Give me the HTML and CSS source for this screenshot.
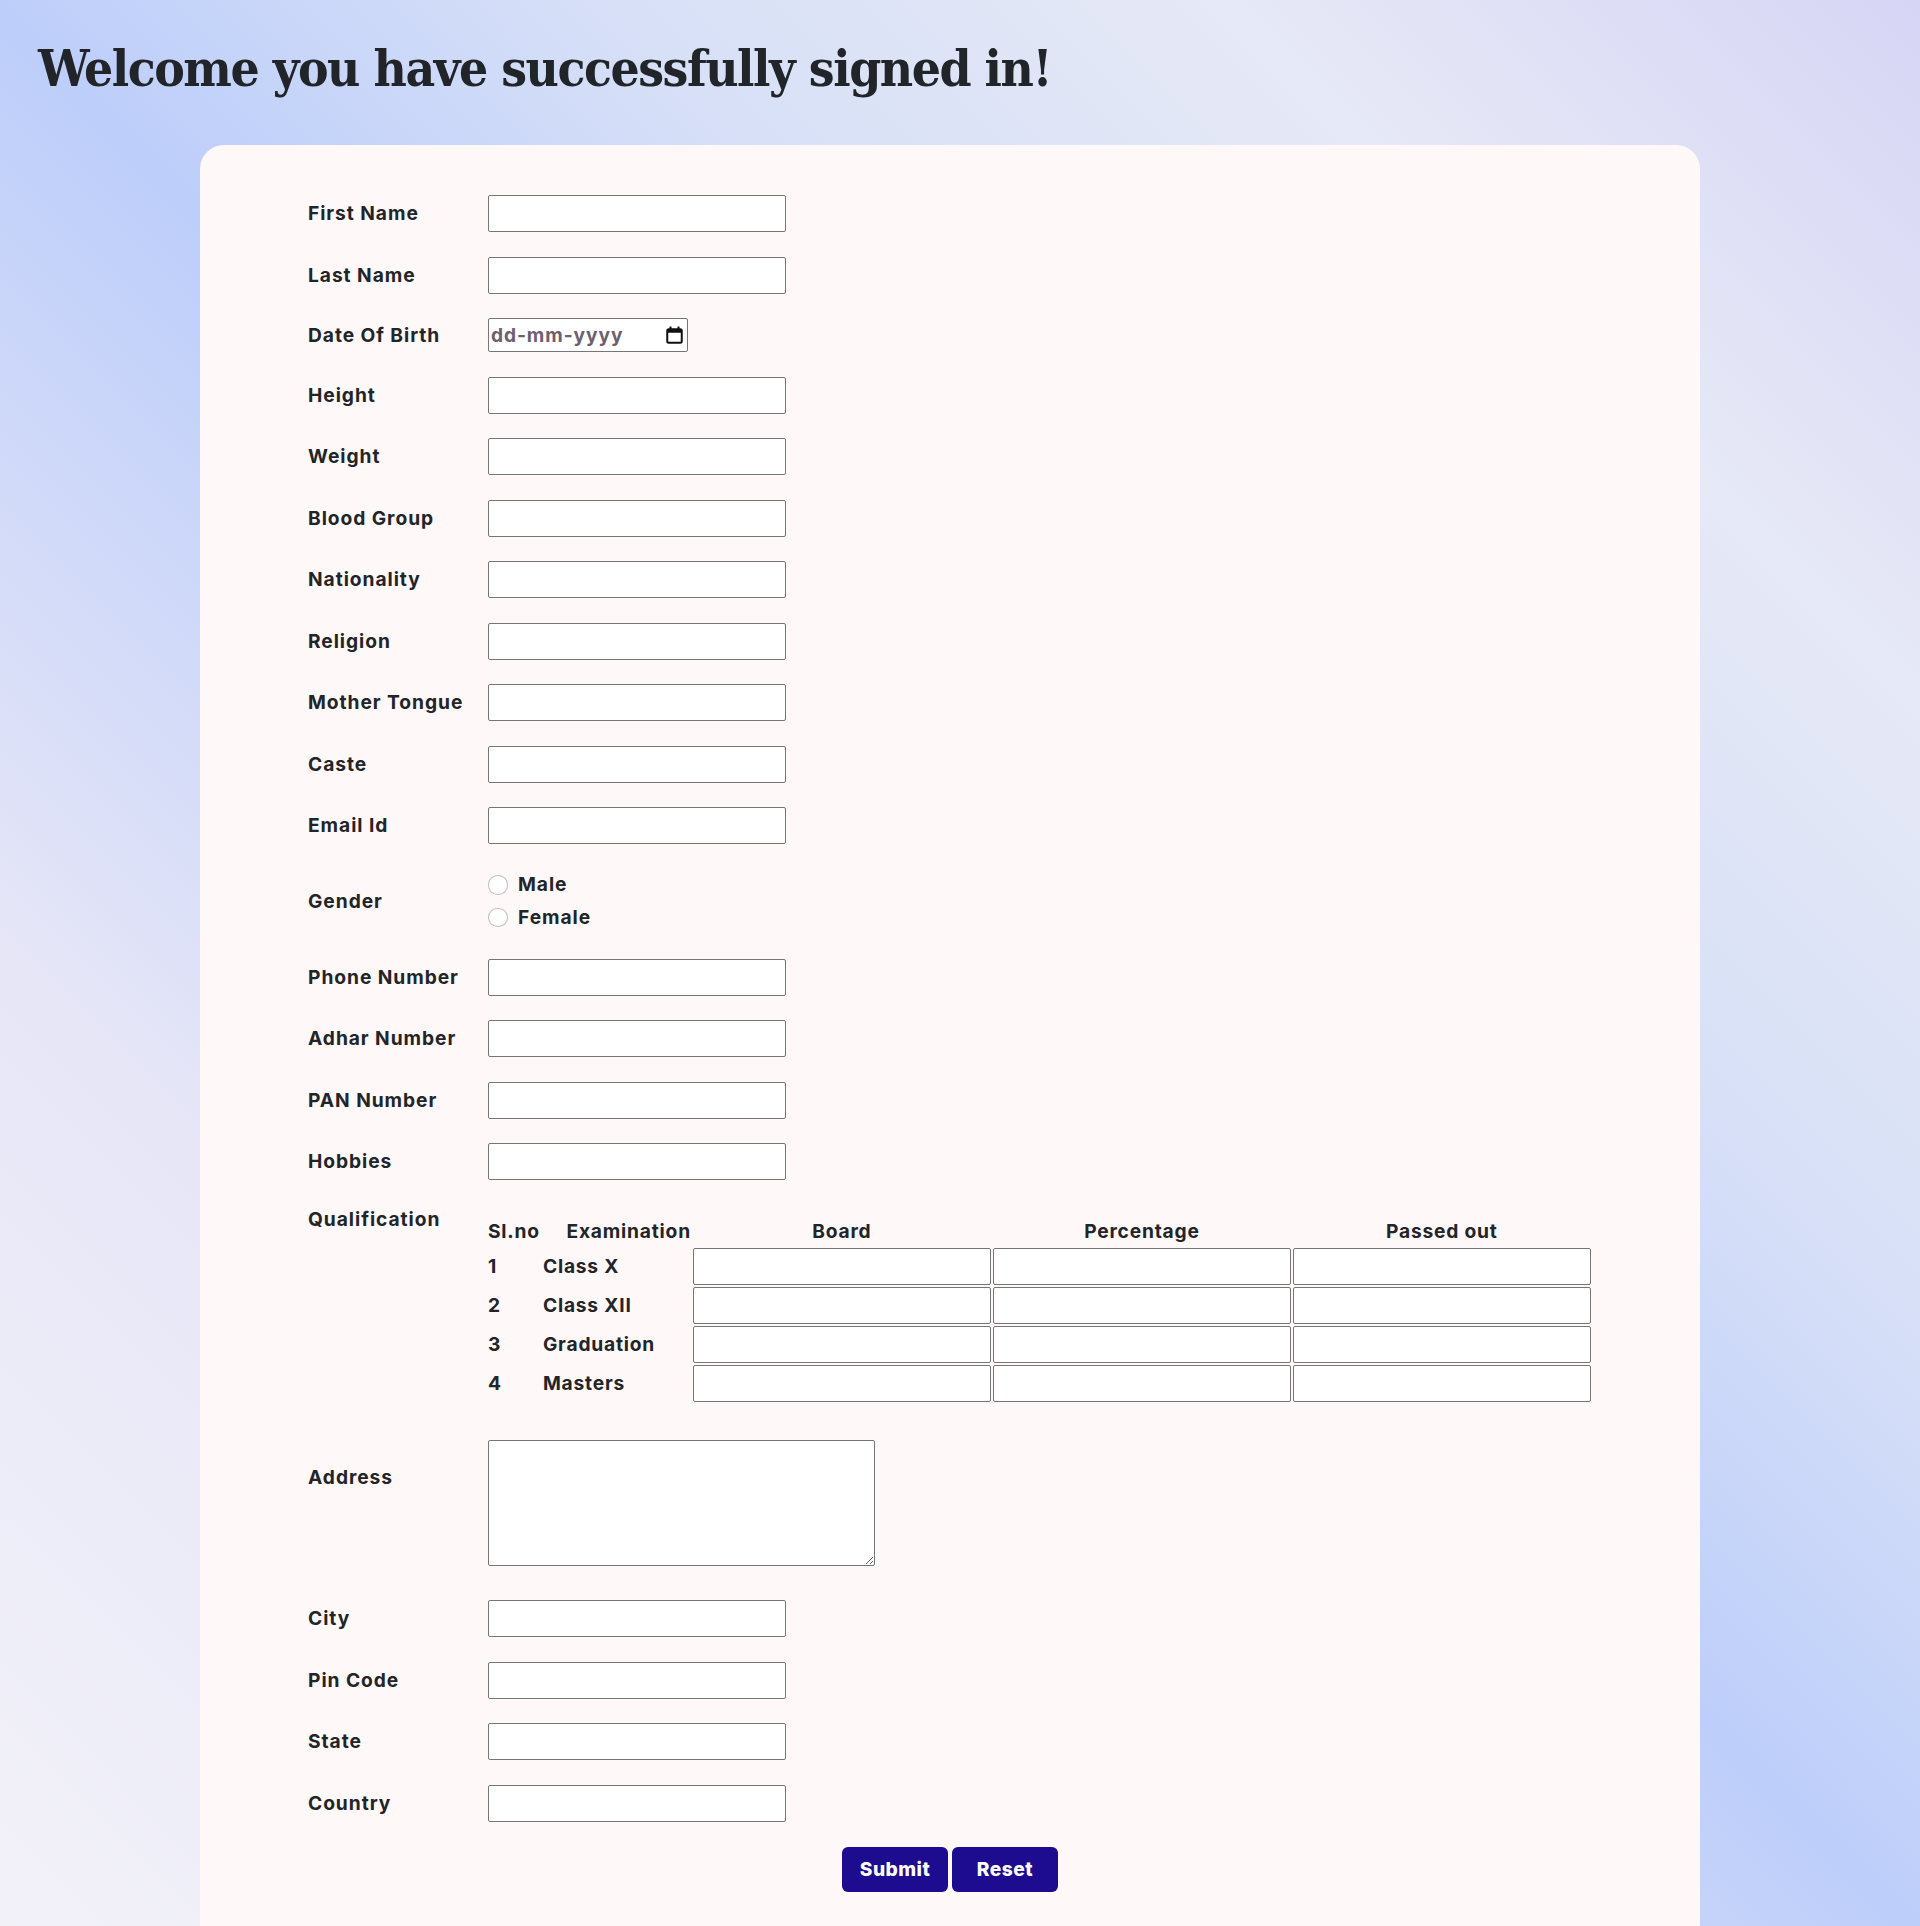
FILE: index.html
```html
<!DOCTYPE html>
<html lang="en">
<head>
<meta charset="utf-8">
<title>Welcome</title>
<link rel="stylesheet" href="styles.css">
</head>
<body>
<h1 class="title">Welcome you have successfully signed in!</h1>
<main class="card">
  <form class="form">
    <div class="row"><label class="label">First Name</label><input class="field" type="text"></div>
    <div class="row"><label class="label">Last Name</label><input class="field" type="text"></div>
    <div class="row"><label class="label">Date Of Birth</label>
      <div class="date-field">
        <input class="date-input" type="text" placeholder="dd-mm-yyyy">
        <svg class="cal" width="17" height="18" viewBox="0 0 17 18" aria-hidden="true">
          <rect x="1.25" y="3.25" width="14.5" height="13.5" rx="1.5" fill="none" stroke="#111" stroke-width="2"/>
          <rect x="1.25" y="3.25" width="14.5" height="3.5" fill="#111"/>
          <rect x="3.5" y="0.5" width="2" height="3.5" fill="#111"/>
          <rect x="11.5" y="0.5" width="2" height="3.5" fill="#111"/>
        </svg>
      </div>
    </div>
    <div class="row"><label class="label">Height</label><input class="field" type="text"></div>
    <div class="row"><label class="label">Weight</label><input class="field" type="text"></div>
    <div class="row"><label class="label">Blood Group</label><input class="field" type="text"></div>
    <div class="row"><label class="label">Nationality</label><input class="field" type="text"></div>
    <div class="row"><label class="label">Religion</label><input class="field" type="text"></div>
    <div class="row"><label class="label">Mother Tongue</label><input class="field" type="text"></div>
    <div class="row"><label class="label">Caste</label><input class="field" type="text"></div>
    <div class="row"><label class="label">Email Id</label><input class="field" type="text"></div>
    <div class="row"><span class="label">Gender</span>
      <div class="radios">
        <label class="radio"><input class="radio-input" type="radio" name="gender"><span>Male</span></label>
        <label class="radio"><input class="radio-input" type="radio" name="gender"><span>Female</span></label>
      </div>
    </div>
    <div class="row"><label class="label">Phone Number</label><input class="field" type="text"></div>
    <div class="row"><label class="label">Adhar Number</label><input class="field" type="text"></div>
    <div class="row"><label class="label">PAN Number</label><input class="field" type="text"></div>
    <div class="row"><label class="label">Hobbies</label><input class="field" type="text"></div>
    <div class="row row-top"><span class="label">Qualification</span>
      <table class="qual">
        <thead>
          <tr><th class="c-sl">Sl.no</th><th class="c-exam">Examination</th><th class="c-in">Board</th><th class="c-in">Percentage</th><th class="c-in">Passed out</th></tr>
        </thead>
        <tbody>
          <tr><td>1</td><td>Class X</td><td><input class="cell" type="text"></td><td><input class="cell" type="text"></td><td><input class="cell" type="text"></td></tr>
          <tr><td>2</td><td>Class XII</td><td><input class="cell" type="text"></td><td><input class="cell" type="text"></td><td><input class="cell" type="text"></td></tr>
          <tr><td>3</td><td>Graduation</td><td><input class="cell" type="text"></td><td><input class="cell" type="text"></td><td><input class="cell" type="text"></td></tr>
          <tr><td>4</td><td>Masters</td><td><input class="cell" type="text"></td><td><input class="cell" type="text"></td><td><input class="cell" type="text"></td></tr>
        </tbody>
      </table>
    </div>
    <div class="row row-address"><label class="label label-address">Address</label><textarea class="area"></textarea></div>
    <div class="row"><label class="label">City</label><input class="field" type="text"></div>
    <div class="row"><label class="label">Pin Code</label><input class="field" type="text"></div>
    <div class="row"><label class="label">State</label><input class="field" type="text"></div>
    <div class="row"><label class="label">Country</label><input class="field" type="text"></div>
    <div class="actions">
      <button class="btn" type="submit">Submit</button>
      <button class="btn" type="reset">Reset</button>
    </div>
  </form>
</main>
</body>
</html>
```
FILE: styles.css
```css
* { box-sizing: border-box; }

html, body { margin: 0; }

body {
  min-height: 1926px;
  font-family: Inter, "Noto Sans", sans-serif;
  font-size: 19.2px;
  line-height: 1.5;
  color: #212529;
  background: linear-gradient(45deg, #f3f2f9 0%, #e6e6f7 26%, #bdcefa 50%, #d7e0f7 66%, #e6e9f6 82%, #d6d5f5 100%);
}

.title {
  margin: 0;
  padding: 38px 0 0 38px;
  height: 145px;
  font-family: "DejaVu Serif Condensed", "DejaVu Serif", serif;
  font-stretch: condensed;
  font-weight: 700;
  font-size: 51px;
  line-height: 1.2;
  letter-spacing: -1.45px;
  color: #212529;
}

.card {
  margin-left: 200px;
  width: 1500px;
  background: #fff8f8;
  border-radius: 24px 24px 0 0;
  padding: 50px 0 60px 108px;
}

.form {
  display: flex;
  flex-direction: column;
  gap: 24.5px;
}

.row {
  display: flex;
  align-items: center;
}

.row-top { align-items: flex-start; }

.label {
  width: 180px;
  flex: none;
  font-weight: 700;
  letter-spacing: 0.95px;
  line-height: 28.8px;
}

.field {
  width: 298px;
  height: 37px;
  border: 1px solid #767676;
  border-radius: 2px;
  background: #fff;
  font: inherit;
  padding: 0 4px;
}

.date-field {
  width: 200px;
  height: 34px;
  border: 1px solid #767676;
  border-radius: 2px;
  background: #fff;
  display: flex;
  align-items: center;
  padding: 0 4px 0 2px;
}

.date-input {
  flex: 1;
  min-width: 0;
  border: 0;
  outline: none;
  background: transparent;
  font: inherit;
  font-weight: 700;
  padding: 0;
  letter-spacing: 0.9px;
}

.date-input::placeholder { color: #6d5f70; opacity: 1; }

.cal { flex: none; }

.radios {
  display: flex;
  flex-direction: column;
}

.radio {
  display: flex;
  align-items: center;
  height: 32.75px;
  font-weight: 700;
  letter-spacing: 0.95px;
}

.radio-input {
  appearance: none;
  -webkit-appearance: none;
  width: 19.5px;
  height: 19.5px;
  margin: 0 10.5px 0 0;
  border: 1px solid rgba(0, 0, 0, 0.25);
  border-radius: 50%;
  background: #fff;
}

.qual {
  margin: 10.5px 0 0 -2px;
  border-spacing: 2px;
  letter-spacing: 0.8px;
}

.qual th, .qual td {
  padding: 0;
  line-height: 28.8px;
  font-weight: 700;
  vertical-align: middle;
}

.qual td:nth-child(2) { padding-left: 1px; }

.c-sl { width: 49px; text-align: left; }
.c-exam { width: 149px; text-align: right; }
.c-in { width: 298px; text-align: center; }

.cell {
  display: block;
  width: 298px;
  height: 37px;
  border: 1px solid #767676;
  border-radius: 2px;
  background: #fff;
  font: inherit;
}

.row-address {
  align-items: flex-start;
  padding: 11.5px 0 10px;
}

.label-address { margin-top: 23.5px; }

.area {
  display: block;
  width: 387px;
  height: 126px;
  border: 1px solid #767676;
  border-radius: 2px;
  background: #fff;
  font: inherit;
  resize: both;
}

.actions {
  display: flex;
  justify-content: center;
  gap: 4.3px;
  margin-left: -108px;
  padding-top: 1px;
}

.btn {
  width: 105.6px;
  height: 44.8px;
  border: 0;
  border-radius: 6px;
  background: #1d0c8f;
  color: #fff;
  font: inherit;
  font-weight: 800;
  letter-spacing: 0.5px;
  padding: 0;
}
```
